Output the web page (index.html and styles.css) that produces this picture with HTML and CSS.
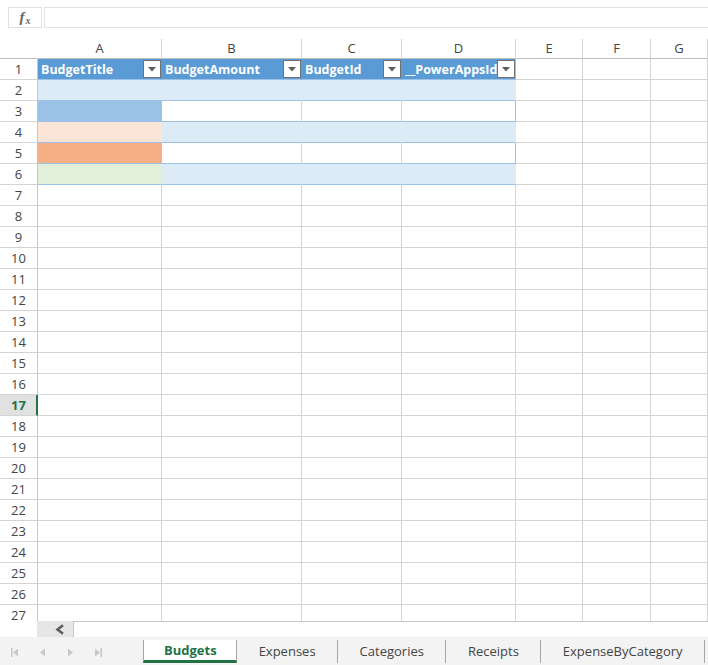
FILE: index.html
```html
<!DOCTYPE html>
<html lang="en">
<head>
<meta charset="utf-8">
<title>Budgets</title>
<link rel="stylesheet" href="styles.css">
</head>
<body>
<div class="app">
  <div class="formula-bar">
    <div class="fx"><span class="fx-f">f</span><span class="fx-x">x</span></div>
    <div class="formula-input"></div>
  </div>

  <div class="sheet">
    <div class="row colhead">
      <div class="corner"></div><div>A</div><div>B</div><div>C</div><div>D</div><div>E</div><div>F</div><div>G</div>
    </div>
    <div class="row">
      <div class="rh">1</div>
      <div class="th tb"><span class="th-text">BudgetTitle</span><span class="filter"><svg width="8" height="5" viewBox="0 0 8 5"><path d="M0 0H8L4 4.5Z"/></svg></span></div>
      <div class="th tb"><span class="th-text">BudgetAmount</span><span class="filter"><svg width="8" height="5" viewBox="0 0 8 5"><path d="M0 0H8L4 4.5Z"/></svg></span></div>
      <div class="th tb"><span class="th-text">BudgetId</span><span class="filter"><svg width="8" height="5" viewBox="0 0 8 5"><path d="M0 0H8L4 4.5Z"/></svg></span></div>
      <div class="th tb tend"><span class="th-text">__PowerAppsId__</span><span class="filter"><svg width="8" height="5" viewBox="0 0 8 5"><path d="M0 0H8L4 4.5Z"/></svg></span></div>
      <div></div><div></div><div></div>
    </div>
    <div class="row">
      <div class="rh">2</div>
      <div class="band tb"></div><div class="band tb"></div><div class="band tb"></div><div class="band tb tend"></div>
      <div></div><div></div><div></div>
    </div>
    <div class="row">
      <div class="rh">3</div>
      <div class="fill-blue tb"></div><div class="tb"></div><div class="tb"></div><div class="tb tend"></div>
      <div></div><div></div><div></div>
    </div>
    <div class="row">
      <div class="rh">4</div>
      <div class="fill-peach tb"></div><div class="band tb"></div><div class="band tb"></div><div class="band tb tend"></div>
      <div></div><div></div><div></div>
    </div>
    <div class="row">
      <div class="rh">5</div>
      <div class="fill-orange tb"></div><div class="tb"></div><div class="tb"></div><div class="tb tend"></div>
      <div></div><div></div><div></div>
    </div>
    <div class="row">
      <div class="rh">6</div>
      <div class="fill-green tb"></div><div class="band tb"></div><div class="band tb"></div><div class="band tb tend"></div>
      <div></div><div></div><div></div>
    </div>
    <div class="row"><div class="rh">7</div><div></div><div></div><div></div><div></div><div></div><div></div><div></div></div>
    <div class="row"><div class="rh">8</div><div></div><div></div><div></div><div></div><div></div><div></div><div></div></div>
    <div class="row"><div class="rh">9</div><div></div><div></div><div></div><div></div><div></div><div></div><div></div></div>
    <div class="row"><div class="rh">10</div><div></div><div></div><div></div><div></div><div></div><div></div><div></div></div>
    <div class="row"><div class="rh">11</div><div></div><div></div><div></div><div></div><div></div><div></div><div></div></div>
    <div class="row"><div class="rh">12</div><div></div><div></div><div></div><div></div><div></div><div></div><div></div></div>
    <div class="row"><div class="rh">13</div><div></div><div></div><div></div><div></div><div></div><div></div><div></div></div>
    <div class="row"><div class="rh">14</div><div></div><div></div><div></div><div></div><div></div><div></div><div></div></div>
    <div class="row"><div class="rh">15</div><div></div><div></div><div></div><div></div><div></div><div></div><div></div></div>
    <div class="row"><div class="rh">16</div><div></div><div></div><div></div><div></div><div></div><div></div><div></div></div>
    <div class="row"><div class="rh active">17</div><div></div><div></div><div></div><div></div><div></div><div></div><div></div></div>
    <div class="row"><div class="rh">18</div><div></div><div></div><div></div><div></div><div></div><div></div><div></div></div>
    <div class="row"><div class="rh">19</div><div></div><div></div><div></div><div></div><div></div><div></div><div></div></div>
    <div class="row"><div class="rh">20</div><div></div><div></div><div></div><div></div><div></div><div></div><div></div></div>
    <div class="row"><div class="rh">21</div><div></div><div></div><div></div><div></div><div></div><div></div><div></div></div>
    <div class="row"><div class="rh">22</div><div></div><div></div><div></div><div></div><div></div><div></div><div></div></div>
    <div class="row"><div class="rh">23</div><div></div><div></div><div></div><div></div><div></div><div></div><div></div></div>
    <div class="row"><div class="rh">24</div><div></div><div></div><div></div><div></div><div></div><div></div><div></div></div>
    <div class="row"><div class="rh">25</div><div></div><div></div><div></div><div></div><div></div><div></div><div></div></div>
    <div class="row"><div class="rh">26</div><div></div><div></div><div></div><div></div><div></div><div></div><div></div></div>
    <div class="row"><div class="rh">27</div><div></div><div></div><div></div><div></div><div></div><div></div><div></div></div>
  </div>

  <div class="hscroll">
    <div class="hscroll-gap"></div>
    <div class="scroll-left"><svg width="10" height="11" viewBox="0 0 10 11"><path d="M8 1.2L2.5 5.5L8 9.8" fill="none" stroke="#5f5f5f" stroke-width="2.6"/></svg></div>
    <div class="track"></div>
  </div>

  <div class="tabbar">
    <div class="nav">
      <span class="nav-btn"><svg width="7" height="9" viewBox="0 0 7 9"><rect x="0" y="0" width="1.5" height="9"/><path d="M7 0.5V8.5L2 4.5Z"/></svg></span>
      <span class="nav-btn"><svg width="5" height="9" viewBox="0 0 5 9"><path d="M5 0.5V8.5L0 4.5Z"/></svg></span>
      <span class="nav-btn"><svg width="5" height="9" viewBox="0 0 5 9"><path d="M0 0.5V8.5L5 4.5Z"/></svg></span>
      <span class="nav-btn"><svg width="7" height="9" viewBox="0 0 7 9"><path d="M0 0.5V8.5L5 4.5Z"/><rect x="5.5" y="0" width="1.5" height="9"/></svg></span>
    </div>
    <div class="tabs">
      <div class="tab active">Budgets</div>
      <div class="tab">Expenses</div>
      <div class="tab">Categories</div>
      <div class="tab">Receipts</div>
      <div class="tab">ExpenseByCategory</div>
    </div>
  </div>
</div>
</body>
</html>
```

FILE: styles.css
```css
html, body {
  margin: 0;
  padding: 0;
  background: #ffffff;
}
body {
  width: 708px;
  height: 665px;
  overflow: hidden;
  font-family: "Open Sans", "Noto Sans", sans-serif;
  color: #444444;
}
.app {
  display: flex;
  flex-direction: column;
  width: 708px;
  height: 665px;
}

/* formula bar */
.formula-bar {
  height: 39px;
  box-sizing: border-box;
  padding: 7px 0 0 8px;
  display: flex;
  gap: 2px;
  flex: none;
}
.fx {
  box-sizing: border-box;
  width: 34px;
  height: 21px;
  border: 1px solid #e1e1e1;
  background: #fff;
  display: flex;
  align-items: center;
  justify-content: center;
  font-family: "Liberation Serif", serif;
  font-style: italic;
  font-weight: bold;
  color: #666666;
}
.fx-f { font-size: 15px; }
.fx-x { font-size: 10px; margin-top: 5px; margin-left: 1px; }
.formula-input {
  flex: 1;
  box-sizing: border-box;
  height: 21px;
  border: 1px solid #e1e1e1;
  border-right: none;
}

/* sheet */
.sheet {
  height: 582px;
  overflow: hidden;
  flex: none;
}
.row {
  display: grid;
  grid-template-columns: 38px 124px 140px 100px 114px 67px 68px 57px;
  height: 21px;
}
.row > div {
  box-sizing: border-box;
  border-right: 1px solid #d4d4d4;
  border-bottom: 1px solid #d4d4d4;
  min-width: 0;
}
.colhead {
  height: 20px;
}
.colhead > div {
  border-bottom-color: #bdbdbd;
  text-align: center;
  font-size: 13px;
  line-height: 19px;
  color: #444;
}
.colhead > .corner {
  border-right-color: #fff;
}
.rh {
  text-align: center;
  font-size: 13px;
  line-height: 20px;
  color: #444;
  border-right-color: #c6c6c6 !important;
}
.rh.active {
  background: #e1e1e1;
  color: #217346;
  font-weight: bold;
  border-right: 2px solid #217346 !important;
  padding-left: 1px;
}

/* table */
.th {
  background: #5b9bd5;
  border-right-color: #5b9bd5 !important;
  display: flex;
  align-items: center;
  padding-left: 3px;
  color: #ffffff;
  font-weight: bold;
  font-size: 12.5px;
  overflow: hidden;
}
.th-text {
  flex: 1;
  min-width: 0;
  overflow: hidden;
  white-space: nowrap;
  padding-top: 1px;
}
.filter {
  flex: none;
  box-sizing: border-box;
  width: 18px;
  height: 18px;
  background: #ffffff;
  border: 1px solid #717171;
  display: flex;
  align-items: center;
  justify-content: center;
}
.filter svg { fill: #5e5e5e; margin-top: 1px; }
.tb { border-bottom-color: #9bc2e6 !important; }
.tend { border-right-color: #9bc2e6 !important; }
.band {
  background: #ddebf7;
  border-right-color: #ddebf7 !important;
}
.fill-blue { background: #9bc2e6; border-right-color: #9bc2e6 !important; }
.fill-peach { background: #fce4d6; border-right-color: #fce4d6 !important; }
.fill-orange { background: #f4b084; border-right-color: #f4b084 !important; }
.fill-green { background: #e2efda; border-right-color: #e2efda !important; }

/* horizontal scroll */
.hscroll {
  height: 16px;
  display: flex;
  flex: none;
}
.hscroll-gap { width: 37px; }
.scroll-left {
  width: 36px;
  background: #e6e6e6;
  display: flex;
  align-items: center;
  justify-content: center;
  padding-left: 10px;
  box-sizing: border-box;
}
.track {
  flex: 1;
  border-top: 1px solid #c6c6c6;
  border-left: 1px solid #c6c6c6;
}

/* tab bar */
.tabbar {
  flex: 1;
  background: #f3f3f3;
  display: flex;
}
.nav {
  width: 143px;
  display: flex;
  align-items: center;
  padding-top: 2px;
}
.nav-btn {
  width: 28px;
  display: flex;
  justify-content: center;
}
.nav-btn svg { fill: #c8c8c8; }
.tabs {
  display: flex;
  height: 23px;
  margin-top: 3px;
}
.tab {
  padding: 0 21px 0 22px;
  border-right: 1px solid #a6a6a6;
  font-size: 13px;
  line-height: 22px;
  color: #444;
  white-space: nowrap;
}
.tab.active {
  background: #ffffff;
  border-left: 1px solid #a6a6a6;
  border-bottom: 3px solid #217346;
  color: #217346;
  font-weight: bold;
  line-height: 20px;
  padding: 0 19px 0 20px;
}
```
